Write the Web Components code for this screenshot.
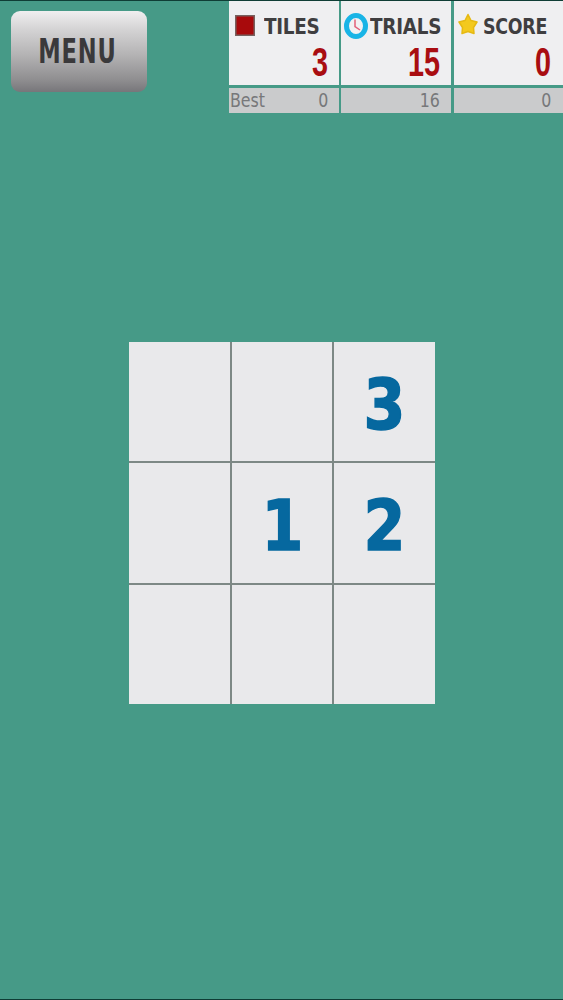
<!DOCTYPE html>
<html>
<head>
<meta charset="utf-8">
<style>
html,body{margin:0;height:100%;background:#469a87;}
body{width:563px;height:1000px;overflow:hidden;}
</style>
</head>
<body>
<game-screen>
	<top-bar>
		<menu-button>MENU</menu-button>
		<stat-box label="TILES" value="3" best="Best" bestvalue="0" icon="tile"></stat-box>
		<stat-box label="TRIALS" value="15" bestvalue="16" icon="clock"></stat-box>
		<stat-box label="SCORE" value="0" bestvalue="0" icon="star"></stat-box>
	</top-bar>
	<tile-board tiles=",,3,,1,2,,,"></tile-board>
</game-screen>
<script>
class GameScreen extends HTMLElement {
	constructor() {
		super()
		this.attachShadow({mode:'open'})
		this.shadowRoot.innerHTML = `
		<style>
		:host{
			display:flex;
			flex-direction:column;
			box-sizing:border-box;
			width:563px;
			height:1000px;
			border-top:1px solid #0f3d35;
			border-bottom:1px solid #0f3d35;
			background:#469a87;
		}
		</style>
		<slot></slot>`
	}
}

class TopBar extends HTMLElement {
	constructor() {
		super()
		this.attachShadow({mode:'open'})
		this.shadowRoot.innerHTML = `
		<style>
		:host{
			display:grid;
			grid-template-columns:216px 110px 110px 110px;
			column-gap:2px;
			padding-left:11px;
			height:112px;
		}
		::slotted(menu-button){margin-top:10px;}
		::slotted(stat-box:last-child){margin-left:1px;}
		</style>
		<slot></slot>`
	}
}

class MenuButton extends HTMLElement {
	constructor() {
		super()
		this.attachShadow({mode:'open'})
		this.shadowRoot.innerHTML = `
		<style>
		:host{
			display:flex;
			align-items:center;
			justify-content:center;
			width:136px;
			height:81px;
			border-radius:9px;
			background:linear-gradient(#f0eff0 0%,#d5d4d5 22%,#b3b2b3 55%,#8f8e90 85%,#77767a 100%);
			color:#3a393b;
			font:bold 33px "DejaVu Sans Condensed","DejaVu Sans",sans-serif;
			letter-spacing:1px;
		}
		span{display:inline-block;transform:translateX(-2px) scaleX(.76);}
		</style>
		<span><slot></slot></span>`
	}
}

const ICONS = {
	tile:`<svg width="20" height="21" viewBox="0 0 20 21"><rect x=".75" y=".75" width="18.5" height="19.5" fill="#a80a0c" stroke="#77615f" stroke-width="1.5"/></svg>`,
	clock:`<svg width="24" height="26" viewBox="0 0 24 26"><ellipse cx="12" cy="13" rx="9.5" ry="10.5" fill="#f1f1f3" stroke="#19b4e6" stroke-width="5"/><path d="M11 6.5V13.5L16 17" fill="none" stroke="#e2607a" stroke-width="1.5"/></svg>`,
	star:`<svg width="20" height="22" viewBox="0 0 20 22"><path d="M10 1.5L13 7.5L19 9L15.5 14.5L16 20.5L10 18.5L4 20.5L4.5 14.5L1 9L7 7.5Z" fill="#f3c91e" stroke="#e6b913" stroke-width="1.5" stroke-linejoin="round"/></svg>`
}

class StatBox extends HTMLElement {
	constructor() {
		super()
		this.attachShadow({mode:'open'})
	}
	connectedCallback() {
		const icon = this.getAttribute('icon')
		this.shadowRoot.innerHTML = `
		<style>
		:host{
			display:flex;
			flex-direction:column;
			gap:3px;
			font-family:"DejaVu Sans Condensed","DejaVu Sans",sans-serif;
		}
		#main{
			box-sizing:border-box;
			height:84px;
			background:#efeff1;
			padding:12px 11px 0 6px;
			display:flex;
			flex-direction:column;
		}
		#head{display:flex;align-items:center;height:26px;}
		#head svg{flex:none;}
		#head.tile svg{margin:-2px 9px 0 0;}
		#head.clock{margin-left:-3px;}
		#head.clock svg{margin-right:2px;}
		#head.star{margin-left:-2px;}
		#head.star svg{margin:-4px 5px 0 0;}
		#label{font-weight:bold;font-size:22px;color:#3f3e40;letter-spacing:-.3px;white-space:nowrap;transform-origin:left;transform:scaleX(.93);}
		:host([icon=star]) #label{transform:scaleX(.88);}
		:host([icon=star]) #main{padding-right:12px;}
		:host([icon=star]) #best{padding-right:12px;}
		#value{
			text-align:right;
			font:bold 40px/36px "Liberation Sans",sans-serif;
			color:#a90d11;
			margin-top:5px;
			transform-origin:right;
			transform:scaleX(.72);
		}
		#best{
			box-sizing:border-box;
			height:25px;
			background:#cacbcc;
			color:#77787a;
			font-size:20px;
			line-height:25px;
			padding:0 11px 0 1px;
			display:flex;
			justify-content:space-between;
		}
		#best span:first-child{transform-origin:left;transform:scaleX(.88);}
		#best span:last-child{transform-origin:right;transform:scaleX(.88);}
		</style>
		<div id="main">
			<div id="head" class="${icon}">${ICONS[icon]}<span id="label">${this.getAttribute('label')}</span></div>
			<div id="value">${this.getAttribute('value')}</div>
		</div>
		<div id="best"><span>${this.getAttribute('best') || ''}</span><span>${this.getAttribute('bestvalue')}</span></div>`
	}
}

class TileBoard extends HTMLElement {
	constructor() {
		super()
		this.attachShadow({mode:'open'})
	}
	connectedCallback() {
		const cells = this.getAttribute('tiles').split(',').map(n => `<tile-cell>${n}</tile-cell>`).join('')
		this.shadowRoot.innerHTML = `
		<style>
		:host{
			display:grid;
			grid-template-columns:101px 100px 101px;
			grid-template-rows:119px 120px 119px;
			gap:2px;
			align-self:center;
			margin-top:229px;
			margin-left:1px;
			background:#7d8885;
			width:306px;
			height:362px;
		}
		</style>
		${cells}`
	}
}

class TileCell extends HTMLElement {
	constructor() {
		super()
		this.attachShadow({mode:'open'})
		this.shadowRoot.innerHTML = `
		<style>
		:host{
			display:flex;
			align-items:center;
			justify-content:center;
			box-sizing:border-box;
			background:#e9e9eb;
			color:#06689f;
			font:bold 70px/1 "DejaVu Sans","Liberation Sans",sans-serif;
			-webkit-text-stroke:1.5px #06689f;
			padding-top:6px;
		}
		span{display:inline-block;transform:scaleX(.86);}
		</style>
		<span><slot></slot></span>`
	}
}

customElements.define('game-screen',GameScreen)
customElements.define('top-bar',TopBar)
customElements.define('menu-button',MenuButton)
customElements.define('stat-box',StatBox)
customElements.define('tile-board',TileBoard)
customElements.define('tile-cell',TileCell)
</script>
</body>
</html>
